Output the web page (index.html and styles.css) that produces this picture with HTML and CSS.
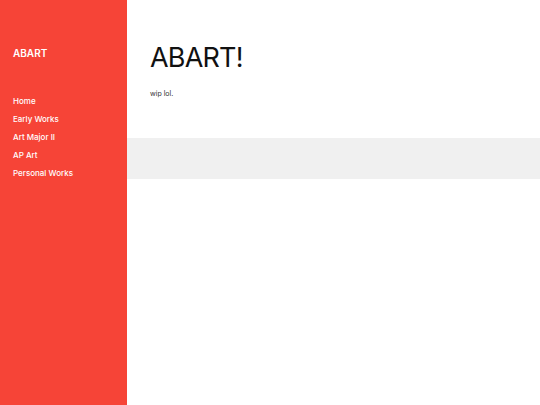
FILE: index.html
```html
<!DOCTYPE html>
<html>
<head>
<meta charset="utf-8">
<link rel="stylesheet" href="styles.css">
</head>
<body>
<div class="layout">
  <aside class="sidebar">
    <div class="brand">ABART</div>
    <nav class="nav">
      <a href="#">Home</a>
      <a href="#">Early Works</a>
      <a href="#">Art Major II</a>
      <a href="#">AP Art</a>
      <a href="#">Personal Works</a>
    </nav>
  </aside>
  <main class="main">
    <section class="intro">
      <h1 class="title">ABART!</h1>
      <p class="lead">wip lol.</p>
    </section>
    <div class="band"></div>
  </main>
</div>
</body>
</html>
```
FILE: styles.css
```css
html, body {
  margin: 0;
  padding: 0;
  height: 100%;
  background: #fff;
  font-family: "Inter", "DejaVu Sans", sans-serif;
}
.layout {
  display: flex;
  height: 405px;
}
.sidebar {
  width: 127px;
  flex: none;
  background: #f64437;
  color: #fff;
  padding: 46px 0 0 13px;
  box-sizing: border-box;
}
.brand {
  font-size: 10px;
  font-weight: 600;
  line-height: 14px;
}
.nav {
  display: flex;
  flex-direction: column;
  margin-top: 32px;
}
.nav a {
  color: #fff;
  text-decoration: none;
  font-size: 8px;
  font-weight: 500;
  line-height: 18px;
}
.main {
  flex: 1;
}
.intro {
  padding: 42px 0 0 23px;
  height: 138px;
  box-sizing: border-box;
}
.title {
  margin: 0;
  font-size: 27px;
  font-weight: 400;
  line-height: 32px;
  letter-spacing: -0.8px;
  color: #111;
}
.lead {
  margin: 15px 0 0;
  font-size: 7px;
  color: #333;
}
.band {
  height: 41px;
  background: #f0f0f0;
}
```
